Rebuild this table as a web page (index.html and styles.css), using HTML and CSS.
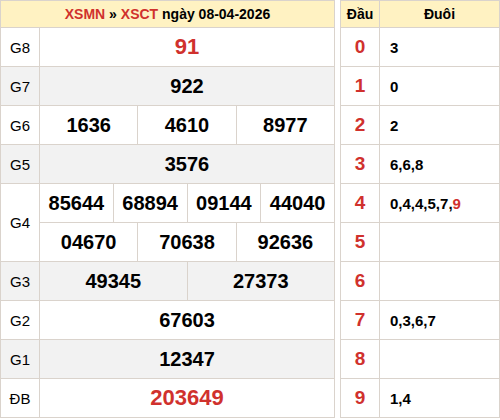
FILE: index.html
```html
<!DOCTYPE html>
<html>
<head>
<meta charset="utf-8">
<link rel="stylesheet" href="styles.css">
</head>
<body>
<div class="page">
  <div class="kq">
    <div class="head span-all"><span><span class="red">XSMN</span> » <span class="red">XSCT</span> ngày 08-04-2026</span></div>

    <div class="lbl">G8</div>
    <div class="num s12 red big">91</div>

    <div class="lbl alt">G7</div>
    <div class="num s12 alt">922</div>

    <div class="lbl">G6</div>
    <div class="num s4">1636</div>
    <div class="num s4">4610</div>
    <div class="num s4">8977</div>

    <div class="lbl alt">G5</div>
    <div class="num s12 alt">3576</div>

    <div class="lbl r2">G4</div>
    <div class="num s3">85644</div>
    <div class="num s3">68894</div>
    <div class="num s3">09144</div>
    <div class="num s3">44040</div>
    <div class="num s4">04670</div>
    <div class="num s4">70638</div>
    <div class="num s4">92636</div>

    <div class="lbl alt">G3</div>
    <div class="num s6 alt">49345</div>
    <div class="num s6 alt">27373</div>

    <div class="lbl">G2</div>
    <div class="num s12">67603</div>

    <div class="lbl alt">G1</div>
    <div class="num s12 alt">12347</div>

    <div class="lbl">ĐB</div>
    <div class="num s12 red big">203649</div>
  </div>

  <div class="loto">
    <div class="head">Đầu</div>
    <div class="head">Đuôi</div>

    <div class="dau">0</div><div class="duoi">3</div>
    <div class="dau">1</div><div class="duoi">0</div>
    <div class="dau">2</div><div class="duoi">2</div>
    <div class="dau">3</div><div class="duoi">6,6,8</div>
    <div class="dau">4</div><div class="duoi"><span>0,4,4,5,7,<span class="red">9</span></span></div>
    <div class="dau">5</div><div class="duoi"></div>
    <div class="dau">6</div><div class="duoi"></div>
    <div class="dau">7</div><div class="duoi">0,3,6,7</div>
    <div class="dau">8</div><div class="duoi"></div>
    <div class="dau">9</div><div class="duoi">1,4</div>
  </div>
</div>
</body>
</html>
```

FILE: styles.css
```css
html, body {
  margin: 0;
  padding: 0;
  background: #fff;
}
body {
  font-family: "Liberation Sans", Arial, sans-serif;
  color: #000;
}
.page {
  display: flex;
  gap: 5px;
  align-items: flex-start;
}
.kq, .loto {
  display: grid;
  box-sizing: border-box;
  border-left: 1px solid #dad3cc;
  border-top: 1px solid #dad3cc;
}
.kq {
  width: 335px;
  grid-template-columns: 39px repeat(12, 1fr);
  grid-auto-rows: 39px;
  grid-template-rows: 27px;
}
.loto {
  width: 160px;
  grid-template-columns: 39px 1fr;
  grid-template-rows: 27px;
  grid-auto-rows: 39px;
}
.kq > div, .loto > div {
  box-sizing: border-box;
  border-right: 1px solid #dad3cc;
  border-bottom: 1px solid #dad3cc;
  display: flex;
  align-items: center;
  justify-content: center;
}
.head {
  background: #fff2c2;
  font-weight: bold;
  font-size: 14px;
}
.span-all { grid-column: 1 / -1; }
.lbl {
  font-size: 15px;
  grid-column: 1;
}
.r2 { grid-row: span 2; }
.num {
  font-size: 20px;
  font-weight: bold;
}
.big { font-size: 22px; }
.s12 { grid-column: span 12; }
.s6 { grid-column: span 6; }
.s4 { grid-column: span 4; }
.s3 { grid-column: span 3; }
.alt { background: #f2f2f2; }
.red { color: #d0312d; }
.dau {
  color: #d0312d;
  font-weight: bold;
  font-size: 19px;
}
.loto > .duoi {
  justify-content: flex-start;
  padding-left: 10px;
  font-weight: bold;
  font-size: 15px;
}
```
